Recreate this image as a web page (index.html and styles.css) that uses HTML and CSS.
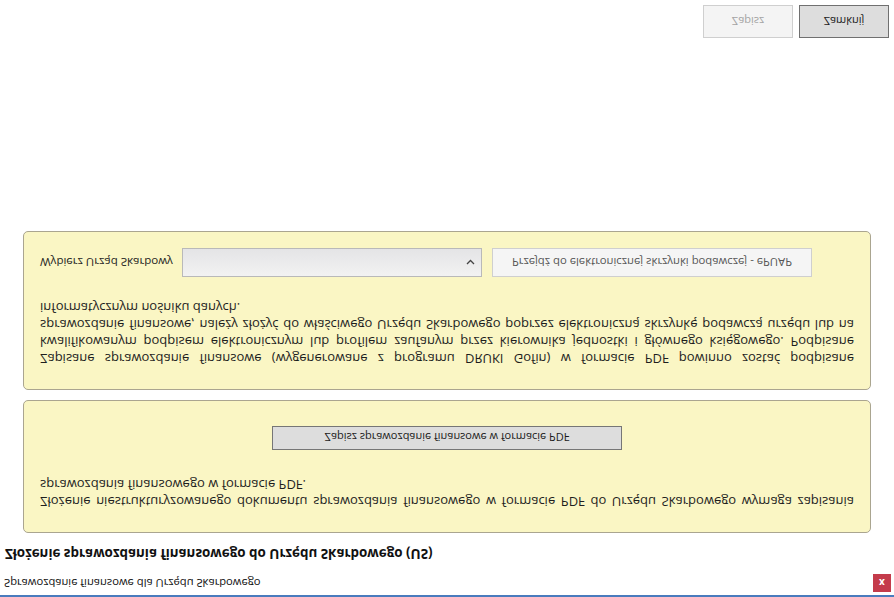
FILE: index.html
```html
<!DOCTYPE html>
<html lang="pl">
<head>
<meta charset="utf-8">
<title>Sprawozdanie finansowe dla Urzędu Skarbowego</title>
<link rel="stylesheet" href="styles.css">
</head>
<body>
<div class="window">
  <div class="titlebar">
    <span class="title">Sprawozdanie finansowe dla Urzędu Skarbowego</span>
    <span class="close">x</span>
  </div>
  <h1 class="heading">Złożenie sprawozdania finansowego do Urzędu Skarbowego (US)</h1>
  <section class="panel panel-pdf">
    <p class="info">Złożenie niestrukturyzowanego dokumentu sprawozdania finansowego w formacie PDF do Urzędu Skarbowego wymaga zapisania sprawozdania finansowego w formacie PDF.</p>
    <div class="center">
      <button class="btn btn-pdf">Zapisz sprawozdanie finansowe w formacie PDF</button>
    </div>
  </section>
  <section class="panel panel-send">
    <p class="info">Zapisane sprawozdanie finansowe (wygenerowane z programu DRUKI Gofin) w formacie PDF powinno zostać podpisane kwalifikowanym podpisem elektronicznym lub profilem zaufanym przez kierownika jednostki i głównego księgowego. Podpisane sprawozdanie finansowe, należy złożyć do właściwego Urzędu Skarbowego poprzez elektroniczną skrzynkę podawczą urzędu lub na informatycznym nośniku danych.</p>
    <div class="office-row">
      <span class="label">Wybierz Urząd Skarbowy</span>
      <div class="select">
        <svg class="chev" width="9" height="6" viewBox="0 0 9 6"><path d="M1 1 L4.5 4.5 L8 1" fill="none" stroke="#444" stroke-width="1.3"/></svg>
      </div>
      <button class="btn btn-epuap">Przejdź do elektronicznej skrzynki podawczej - ePUAP</button>
    </div>
  </section>
  <div class="footer">
    <button class="btn btn-foot btn-disabled" disabled>Zapisz</button>
    <button class="btn btn-foot btn-close">Zamknij</button>
  </div>
</div>
</body>
</html>
```

FILE: styles.css
```css
html, body {
  margin: 0;
  padding: 0;
  height: 597px;
  overflow: hidden;
  background: #ffffff;
}

.window {
  height: 597px;
  display: flex;
  flex-direction: column;
  transform: scaleY(-1);
  font-family: "Open Sans", "Noto Sans", "DejaVu Sans", sans-serif;
  color: #1e1e1e;
  box-sizing: border-box;
}

.titlebar {
  border-top: 2px solid #4a7bbd;
  height: 23px;
  display: flex;
  align-items: center;
  justify-content: space-between;
  padding: 0 3px 0 4px;
}

.title {
  font-size: 11.2px;
  color: #111;
}

.close {
  width: 18px;
  height: 18px;
  background: #c43b4b;
  color: #fff;
  font-size: 10px;
  font-weight: bold;
  display: flex;
  align-items: center;
  justify-content: center;
  line-height: 1;
}

.heading {
  margin: 0;
  padding: 10px 0 0 5px;
  font-size: 13.4px;
  line-height: 16px;
  font-weight: bold;
  color: #111;
}

.panel {
  margin: 0 23px;
  background: #faf6c4;
  border: 1px solid #aaa590;
  border-radius: 5px;
  padding: 22px 16px 0 16px;
}

.panel-pdf {
  margin-top: 13px;
  height: 133px;
  box-sizing: border-box;
}

.panel-send {
  margin-top: 10px;
  height: 159px;
  box-sizing: border-box;
}

.info {
  margin: 0;
  font-size: 13px;
  line-height: 17px;
  text-align: justify;
  color: #1e1e1e;
}

.center {
  display: flex;
  justify-content: center;
  margin-top: 26px;
}

.btn {
  font-family: "Open Sans", "Noto Sans", "DejaVu Sans", sans-serif;
  margin: 0;
  padding: 0;
  box-sizing: border-box;
}

.btn-pdf {
  width: 350px;
  height: 24px;
  background: #dddddd;
  border: 1px solid #767676;
  font-size: 11px;
  color: #1a1a1a;
}

.office-row {
  display: grid;
  grid-template-columns: 132px 300px 320px;
  column-gap: 10px;
  align-items: center;
  margin-top: 22px;
}

.label {
  font-size: 11.5px;
  white-space: nowrap;
  color: #1e1e1e;
}

.select {
  height: 29px;
  box-sizing: border-box;
  border: 1px solid #b9b9b9;
  background: linear-gradient(#f2f2f2, #e4e4e6);
  display: flex;
  align-items: center;
  justify-content: flex-end;
  padding-right: 6px;
}

.btn-epuap {
  height: 29px;
  background: #f5f5f5;
  border: 1px solid #cfcfcf;
  font-size: 11.3px;
  color: #555;
}

.footer {
  margin-top: auto;
  display: flex;
  justify-content: flex-end;
  gap: 6px;
  padding: 0 5px 5px 0;
}

.btn-foot {
  width: 90px;
  height: 33px;
  font-size: 11px;
}

.btn-disabled {
  background: #f4f4f4;
  border: 1px solid #cfcfcf;
  color: #a3a3a3;
}

.btn-close {
  background: #dddddd;
  border: 1px solid #707070;
  color: #1a1a1a;
}
```
